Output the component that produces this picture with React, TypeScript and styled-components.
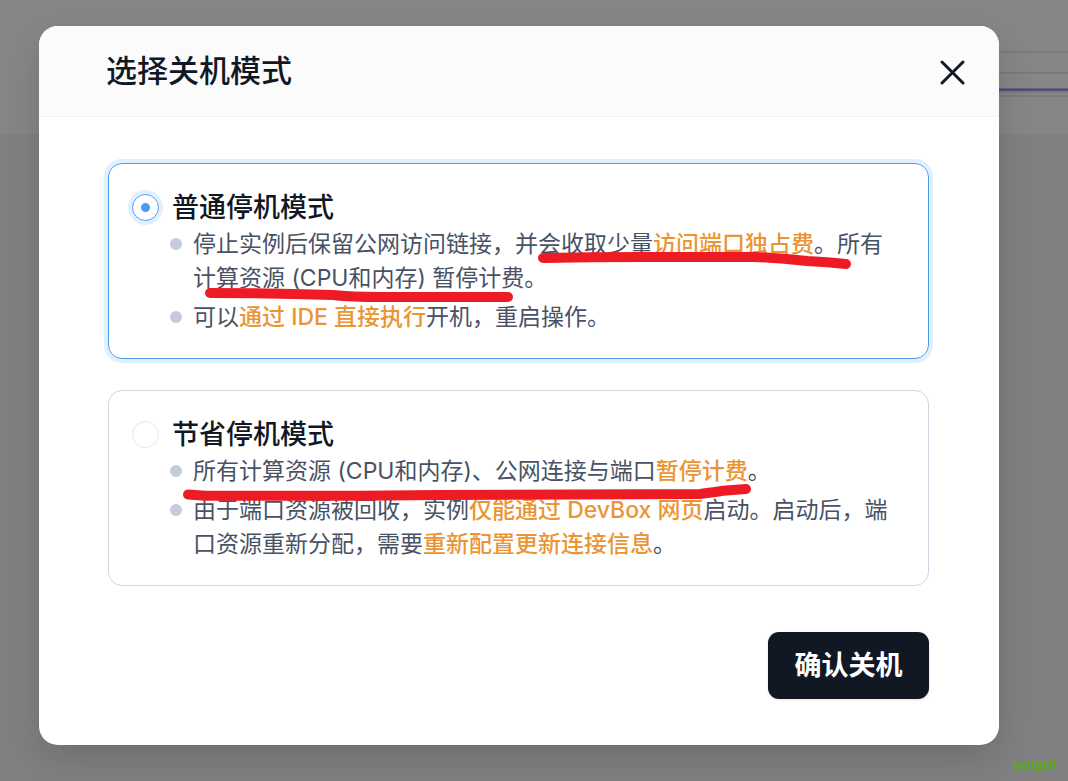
import React, { useState } from 'react';
import styled, { createGlobalStyle } from 'styled-components';

const GlobalStyle = createGlobalStyle`
  *, *::before, *::after { box-sizing: border-box; }
  body {
    margin: 0;
    background: #808082;
    color: #485264;
    font-family: Inter, 'Noto Sans CJK SC', sans-serif;
  }
`;

const Page = styled.div`
  display: grid;
  position: relative;
  min-height: 100vh;
  grid-template-columns: minmax(0, 1fr);

  & > * { grid-area: 1 / 1; }
`;

const Backdrop = styled.div`
  display: flex;
  flex-direction: column;
  background: #808082;
`;

const BackdropPanel = styled.div`
  display: flex;
  justify-content: flex-end;
  height: 134px;
  background: #868686;
`;

const Overlay = styled.div`
  position: relative;
  display: flex;
  align-items: flex-start;
  padding: 26px 69px 36px 39px;
`;

const Dialog = styled.section`
  flex: 1;
  min-width: 0;
  overflow: hidden;
  border-radius: 19px;
  background: #fff;
  box-shadow: 0 14px 36px rgba(0, 0, 0, 0.14);
`;

const DialogHeader = styled.header`
  display: flex;
  align-items: center;
  justify-content: space-between;
  height: 91px;
  padding: 0 34px 0 67px;
  border-bottom: 1px solid #f1f1f2;
  background: #fbfbfc;
`;

const Title = styled.h1`
  margin: 0;
  color: #111824;
  font-size: 31px;
  font-weight: 500;
  line-height: 40px;
`;

const CloseButton = styled.button`
  display: flex;
  padding: 2px 0 0;
  border: 0;
  background: none;
  cursor: pointer;
`;

const Form = styled.form`
  display: flex;
  flex-direction: column;
  padding: 46px 70px 46px 69px;
`;

const Options = styled.div`
  display: flex;
  flex-direction: column;
  gap: 31px;
`;

const OptionCard = styled.div<{ $selected: boolean }>`
  padding: 24px 23px 23px;
  border: 1px solid ${(p) => (p.$selected ? '#4a9aee' : '#cdd5e1')};
  border-radius: 14px;
  box-shadow: ${(p) => (p.$selected ? '0 0 0 4px #e2effd' : 'none')};
`;

const OptionLabel = styled.label`
  display: flex;
  align-items: center;
  gap: 13px;
  color: #111824;
  font-size: 27px;
  font-weight: 500;
  line-height: 39px;
  cursor: pointer;
`;

const Radio = styled.input`
  appearance: none;
  flex: none;
  width: 27px;
  height: 27px;
  margin: 0;
  border: 1px solid #e5e7f0;
  border-radius: 50%;
  background: #fff;

  &:checked {
    border-color: #4a9aee;
    background: radial-gradient(circle, #4a9aee 4px, #fff 5px);
    box-shadow: 0 0 0 4px #e2effd;
  }
`;

const Details = styled.ul`
  display: flex;
  flex-direction: column;
  gap: 5px;
  margin: 0;
  padding: 0 16px 1px 38px;
  list-style: none;
`;

const Detail = styled.li`
  display: flex;
  gap: 11px;
  font-size: 23px;
  line-height: 34px;

  &::before {
    content: '';
    flex: none;
    width: 12px;
    height: 12px;
    margin-top: 11px;
    border-radius: 50%;
    background: #c4cbda;
  }
`;

const Highlight = styled.span`
  color: #ea9534;
  font-weight: 500;
`;

const ConfirmButton = styled.button`
  align-self: flex-end;
  width: 161px;
  height: 67px;
  margin-top: 46px;
  padding: 0 0 4px;
  border: 0;
  border-radius: 11px;
  background: #111824;
  box-shadow: 0 1px 3px rgba(17, 24, 36, 0.12);
  color: #fff;
  font: inherit;
  font-size: 27px;
  font-weight: 600;
  cursor: pointer;
`;

const Markup = styled.svg`
  position: absolute;
  top: 0;
  left: 0;
  pointer-events: none;
`;

const Watermark = styled.span`
  position: absolute;
  right: 11px;
  bottom: 8px;
  color: #58ac14;
  font-family: Roboto, sans-serif;
  font-size: 13px;
  font-weight: 700;
  line-height: 16px;
`;

const modes = [
  {
    id: 'normal',
    name: '普通停机模式',
    details: [
      <>停止实例后保留公网访问链接，并会收取少量<Highlight>访问端口独占费</Highlight>。所有计算资源 (CPU和内存) 暂停计费。</>,
      <>可以<Highlight>通过 IDE 直接执行</Highlight>开机，重启操作。</>,
    ],
  },
  {
    id: 'saving',
    name: '节省停机模式',
    details: [
      <>所有计算资源 (CPU和内存)、公网连接与端口<Highlight>暂停计费</Highlight>。</>,
      <>由于端口资源被回收，实例<Highlight>仅能通过 DevBox 网页</Highlight>启动。启动后，端口资源重新分配，需要<Highlight>重新配置更新连接信息</Highlight>。</>,
    ],
  },
];

export default function App() {
  const [mode, setMode] = useState('normal');

  return (
    <Page>
      <GlobalStyle />
      <Backdrop aria-hidden="true">
        <BackdropPanel>
          <svg width="80" height="134" viewBox="0 0 80 134">
            <path d="M0 52H80M0 73H80M0 96H80" stroke="#777a80" strokeWidth="2" />
            <path d="M0 91H80" stroke="#77727f" strokeWidth="3" />
            <path d="M0 89.500H80" stroke="#4a3f80" strokeWidth="2" />
          </svg>
        </BackdropPanel>
      </Backdrop>
      <Overlay>
        <Dialog role="dialog" aria-modal="true" aria-labelledby="dialog-title">
          <DialogHeader>
            <Title id="dialog-title">选择关机模式</Title>
            <CloseButton type="button" aria-label="关闭">
              <svg width="25" height="25" viewBox="0 0 25 25" fill="none">
                <path d="M2 2L23 23M23 2L2 23" stroke="#111824" strokeWidth="3" strokeLinecap="round" />
              </svg>
            </CloseButton>
          </DialogHeader>
          <Form onSubmit={(e) => e.preventDefault()}>
            <Options>
              {modes.map((m) => (
                <OptionCard key={m.id} $selected={mode === m.id}>
                  <OptionLabel>
                    <Radio
                      type="radio"
                      name="mode"
                      value={m.id}
                      checked={mode === m.id}
                      onChange={() => setMode(m.id)}
                    />
                    {m.name}
                  </OptionLabel>
                  <Details>
                    {m.details.map((d, i) => (
                      <Detail key={i}>
                        <div>{d}</div>
                      </Detail>
                    ))}
                  </Details>
                </OptionCard>
              ))}
            </Options>
            <ConfirmButton type="submit">确认关机</ConfirmButton>
          </Form>
        </Dialog>
        <Markup width="900" height="520" viewBox="0 0 900 520" fill="none" stroke="#ed1c24" strokeWidth="10" strokeLinecap="round" strokeLinejoin="round" aria-hidden="true">
          <path d="M543 258Q590 257 640 257H755Q780 258 807 261Q828 262 846 264" />
          <path d="M210 293Q270 293 333 295Q350 297 380 297H508" />
          <path d="M188 494.500L205 495.700H360L440 495L700 494Q715 492 723 490.700L746 489" />
        </Markup>
      </Overlay>
      <Watermark>yangeit</Watermark>
    </Page>
  );
}
